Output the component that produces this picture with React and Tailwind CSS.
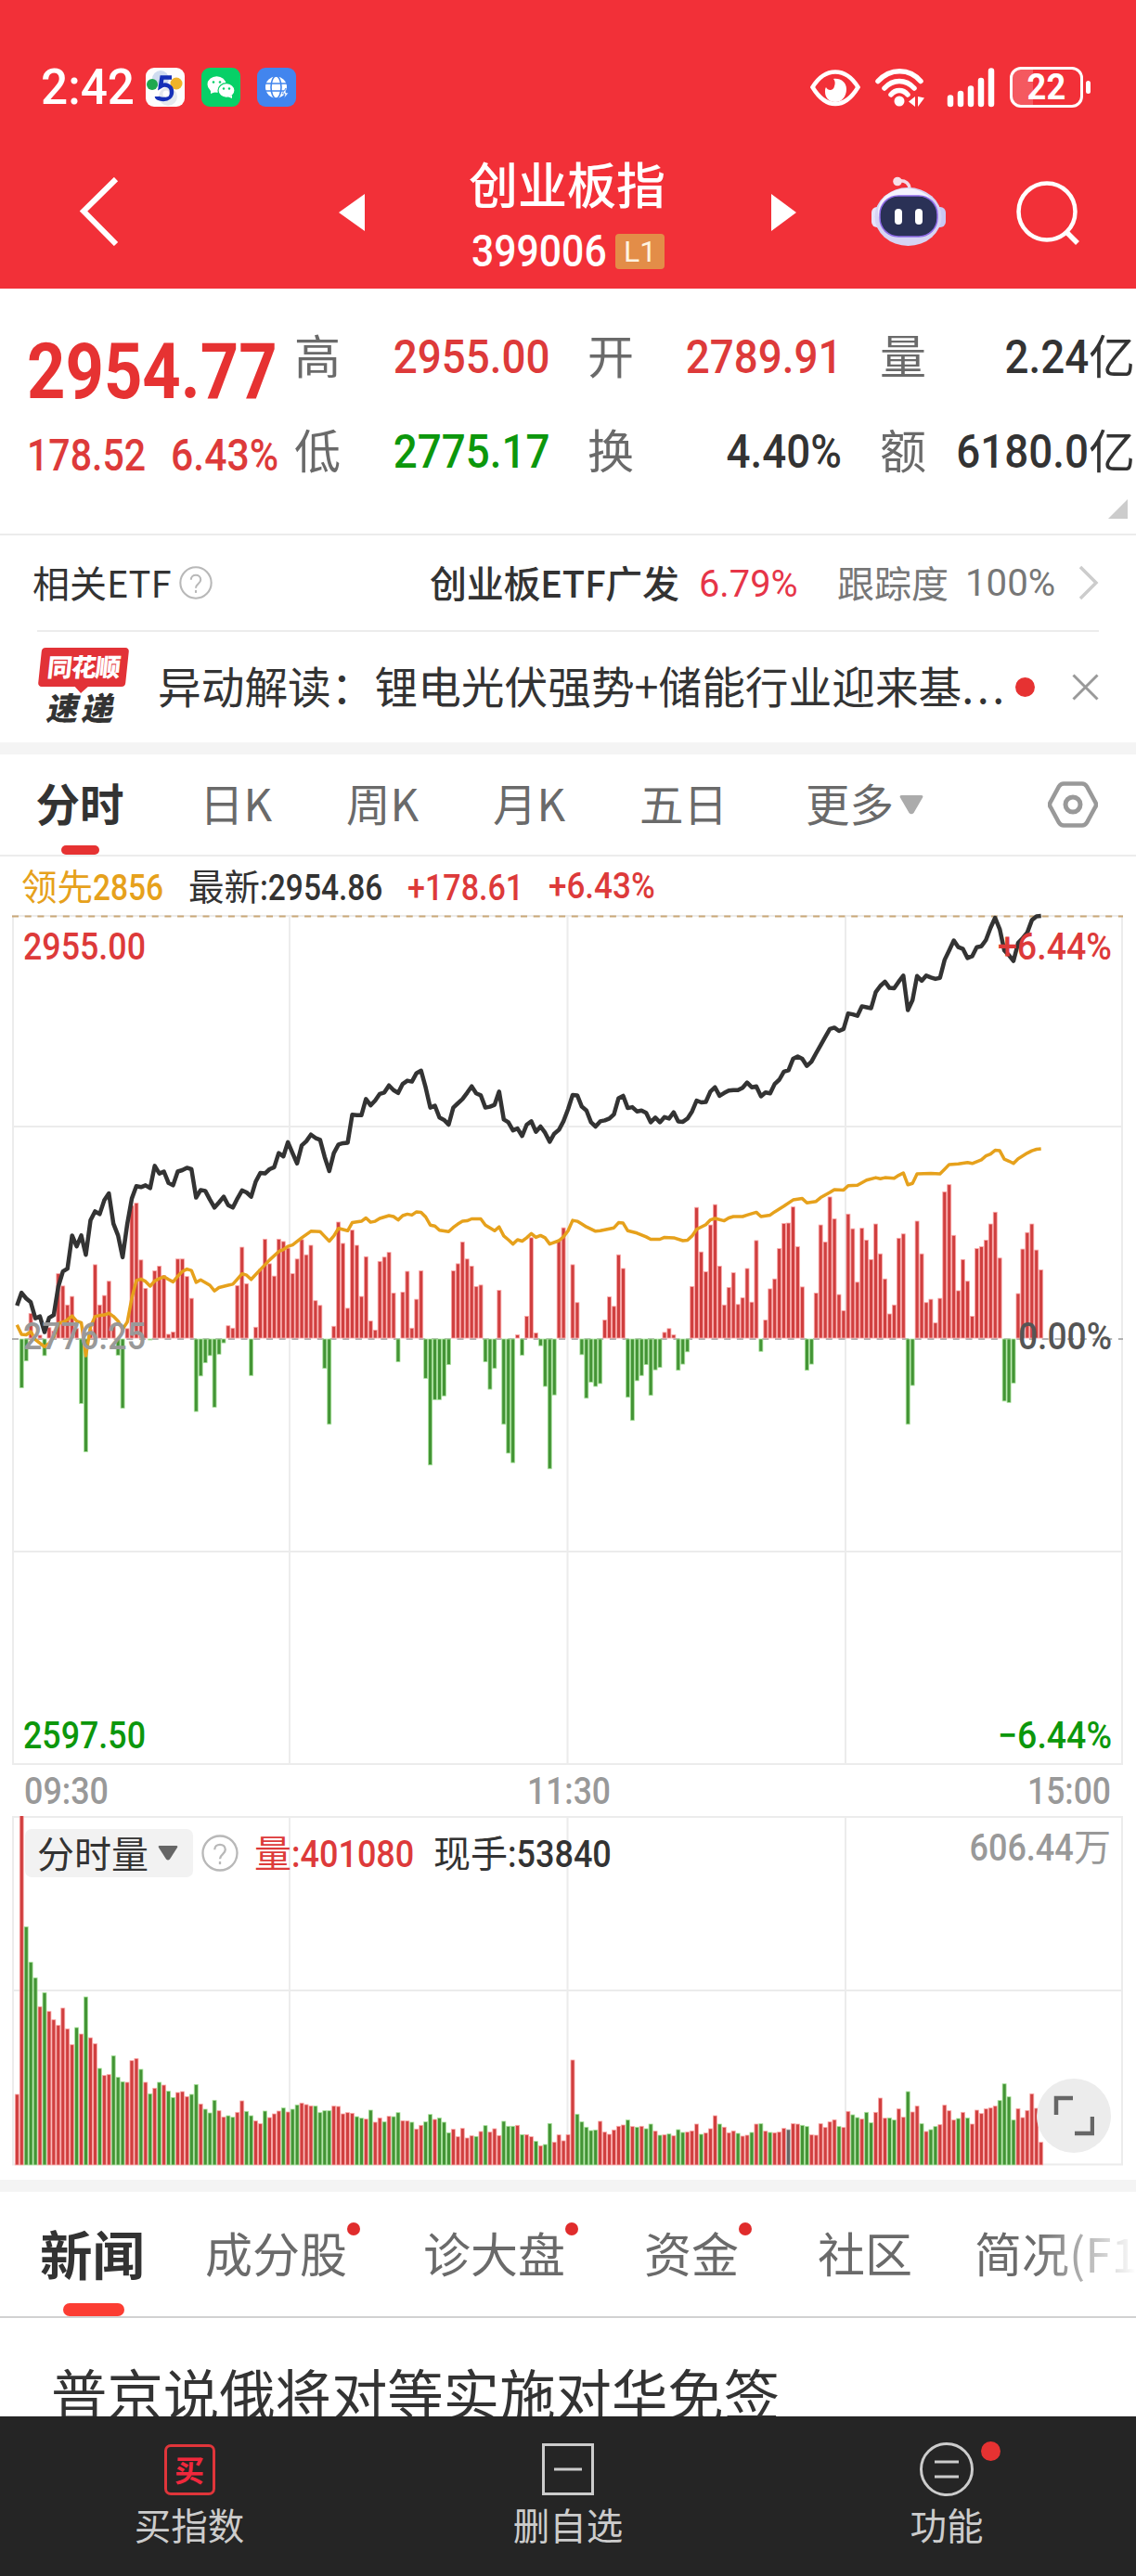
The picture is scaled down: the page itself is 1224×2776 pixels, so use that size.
import clsx from "clsx"

const PITCH = 4.948
const FIRST_X = 18.3

// price curve, one level per minute
const price = [
    1190, 1163, 1175, 1183, 1217, 1213, 1246, 1216, 1210, 1150, 1118, 1112, 1042, 1065, 1042, 1083, 1010, 991, 997, 968,
    953, 1017, 1042, 1088, 1018, 964, 938, 940, 936, 942, 895, 911, 907, 931, 936, 907, 904, 899, 902, 962,
    946, 948, 966, 983, 972, 960, 978, 983, 964, 947, 951, 960, 928, 910, 911, 902, 898, 868, 875, 845,
    868, 890, 852, 843, 829, 836, 840, 876, 906, 868, 850, 847, 846, 787, 788, 788, 754, 767, 757, 743,
    740, 725, 735, 741, 722, 715, 717, 699, 694, 730, 772, 768, 793, 798, 808, 772, 763, 754, 741, 727,
    742, 746, 772, 770, 766, 738, 797, 803, 820, 816, 832, 808, 801, 823, 812, 825, 844, 827, 819, 801,
    775, 745, 746, 770, 778, 803, 812, 801, 799, 795, 786, 752, 747, 773, 771, 780, 778, 783, 803, 793,
    803, 792, 795, 782, 801, 802, 795, 780, 757, 761, 760, 738, 729, 747, 741, 736, 735, 735, 730, 719,
    729, 727, 748, 740, 742, 722, 713, 696, 693, 669, 664, 669, 684, 675, 657, 640, 623, 606, 603, 610,
    606, 573, 575, 578, 558, 560, 562, 528, 515, 506, 519, 520, 506, 493, 566, 545, 494, 504, 493, 497,
    500, 498, 460, 440, 419, 433, 437, 456, 452, 433, 431, 418, 392, 371, 395, 440, 450, 462, 424, 414,
    402, 376, 368, 367,
]

// leading curve, [minute, level]
const leading = [
    [0, 1231], [1, 1251], [2, 1252], [3, 1245], [4, 1262], [6, 1277], [7, 1270], [8, 1255], [9, 1228], [10, 1225],
    [11, 1220], [12, 1212], [13, 1223], [14, 1226], [15, 1296], [16, 1235], [17, 1213], [18, 1211], [19, 1210], [20, 1206],
    [21, 1213], [22, 1223], [23, 1240], [24, 1225], [25, 1175], [26, 1137], [27, 1134], [28, 1139], [29, 1149], [30, 1138],
    [31, 1133], [32, 1129], [33, 1135], [34, 1140], [35, 1128], [36, 1118], [37, 1113], [38, 1116], [39, 1141], [40, 1136],
    [42, 1147], [43, 1159], [44, 1152], [46, 1147], [47, 1145], [48, 1134], [49, 1123], [50, 1126], [51, 1135], [53, 1114],
    [55, 1094], [57, 1076], [58, 1072], [59, 1065], [60, 1062], [62, 1047], [64, 1033], [66, 1034], [67, 1044], [68, 1054],
    [69, 1043], [70, 1027], [72, 1032], [73, 1015], [75, 1012], [76, 1005], [77, 1014], [78, 1012], [79, 1006], [81, 1000],
    [82, 1002], [83, 1009], [84, 1000], [85, 997], [86, 999], [87, 992], [88, 993], [89, 1003], [90, 1020], [91, 1022],
    [92, 1031], [94, 1034], [95, 1025], [96, 1018], [97, 1012], [98, 1011], [99, 1007], [101, 1007], [102, 1020], [104, 1032],
    [105, 1024], [106, 1043], [107, 1051], [108, 1060], [109, 1051], [110, 1054], [111, 1047], [112, 1038], [113, 1046], [114, 1042],
    [115, 1047], [116, 1060], [118, 1053], [119, 1045], [120, 1032], [121, 1010], [122, 1012], [123, 1018], [124, 1024], [126, 1033],
    [127, 1032], [130, 1026], [131, 1015], [132, 1016], [133, 1032], [135, 1037], [137, 1045], [138, 1050], [140, 1050], [141, 1046],
    [143, 1047], [145, 1053], [146, 1052], [147, 1043], [148, 1029], [150, 1019], [151, 1009], [152, 1006], [154, 1011], [155, 1005],
    [156, 1002], [158, 1002], [159, 999], [161, 993], [162, 1002], [164, 999], [165, 992], [167, 980], [169, 967], [171, 964],
    [172, 973], [174, 970], [175, 962], [177, 951], [178, 945], [180, 946], [181, 937], [183, 936], [185, 925], [187, 920],
    [188, 922], [189, 920], [191, 921], [192, 915], [193, 910], [194, 935], [195, 932], [196, 912], [199, 911], [201, 912],
    [202, 902], [203, 892], [205, 891], [207, 888], [208, 890], [210, 882], [211, 874], [212, 870], [213, 862], [214, 863],
    [215, 881], [216, 885], [217, 890], [218, 880], [220, 868], [221, 863], [222, 860], [223, 859],
]

// momentum bars around the zero line
const momentum = [
    0, -103, -46, 52, 0, 6, -35, 22, 15, 136, 110, 70, 88, 20, -136, -238, 18, 155, 70, 90,
    120, 28, -34, -146, 20, 280, 285, 165, 105, -2, 142, 152, 132, 8, 13, 167, 167, 130, 84, -153,
    -78, -50, -35, -144, -32, -8, 26, 21, 111, 192, 115, -77, 23, 145, 209, 157, 131, 209, 204, 190,
    136, 167, 208, 176, 196, 79, 69, -62, -180, 25, 245, 200, 63, 228, 196, 88, 172, 36, 17, 162,
    171, 181, 95, -48, 97, 141, 21, 82, 142, -83, -266, -128, -128, -120, -54, 142, 157, 203, 167, 152,
    109, 112, -48, -106, -62, 101, -180, -241, -261, 7, -34, 46, 212, 11, -14, -100, -274, -118, 207, 233,
    0, 155, 75, -33, -125, -91, -100, -94, 38, 87, 67, 176, 147, -123, -172, -88, -77, -54, -119, -65,
    -60, 12, 20, 7, -66, -53, -27, 109, 276, 182, 140, 239, 282, 152, 70, 107, 138, 71, 85, 147,
    76, 206, -26, 38, 104, 125, 189, 242, 243, 277, 193, 108, -66, -53, 95, 239, 203, 298, 252, 92,
    58, 262, 231, 118, 232, 207, 166, 241, 178, 125, 51, 70, 211, 220, -180, -98, 247, 178, 75, 82,
    32, 84, 309, 324, 217, 100, 166, 120, 46, 189, 193, 207, 241, 266, 169, -131, -134, -93, 94, 188,
    223, 241, 186, 144,
]

// volume levels, a negative one is a falling minute
const volume = [
    1252, 350, -710, -825, -875, 969, -923, 984, 1011, 1029, 973, 1040, 1091, -1036, 1057, -937, 1069, 1088, -1168, 1191,
    1188, -1127, -1197, -1211, 1213, 1143, 1136, -1171, 1213, -1250, 1232, -1213, 1222, -1242, -1262, 1246, 1243, 1259, -1252, -1220,
    1283, -1300, -1312, -1271, 1305, 1325, -1321, -1326, 1310, 1273, -1307, -1321, 1338, 1347, -1306, 1327, 1315, 1306, -1296, 1309,
    -1300, -1286, 1280, 1285, 1289, -1290, -1311, -1305, -1305, 1290, 1291, 1315, 1311, 1313, -1324, -1329, 1332, -1303, 1342, 1328,
    -1341, 1323, -1324, -1311, 1337, 1338, -1342, 1364, 1352, -1341, -1317, 1333, -1328, -1342, -1376, 1365, 1389, 1362, 1393, 1386,
    -1388, 1372, -1353, 1374, 1363, 1385, -1339, -1355, -1355, 1352, -1382, 1382, 1389, -1404, 1418, -1414, -1346, 1407, 1383, 1402,
    1382, 1141, -1316, -1341, -1358, -1369, -1367, 1339, 1374, 1381, 1367, 1355, 1351, -1335, 1356, -1358, 1355, -1363, -1348, 1371,
    -1384, 1383, -1380, 1386, -1366, -1375, 1374, 1370, 1348, -1381, 1377, 1363, 1321, -1348, 1358, 1376, 1370, -1378, 1387, 1384,
    -1375, 1348, -1347, 1371, -1375, 1376, 1374, 1362, 1366, 1347, 1348, -1352, -1356, 1383, 1384, 1347, 1359, 1341, 1334, -1356,
    1359, 1307, -1318, -1327, 1332, -1310, -1344, 1310, 1264, 1329, -1328, -1335, 1299, 1326, -1243, 1309, 1290, -1347, 1372, -1366,
    -1356, 1350, 1287, 1305, 1335, -1330, 1310, -1328, 1348, 1303, 1314, 1299, 1296, 1290, -1272, -1218, -1260, -1335, 1298, 1327,
    1304, 1250, 1297, 1407,
]
const FLAT_MINUTE = 168

const xAt = (i) => FIRST_X + i * PITCH
const yAt = (level) => (level - 367) / 1.96
const toPoints = (pairs) => pairs.map(([i, level]) => `${xAt(i).toFixed(1)},${yAt(level).toFixed(1)}`).join(" ")

const UP = { fill: "#d03f3f", stroke: "#fba9a9" }
const DOWN = { fill: "#439435", stroke: "#a9e39c" }
const FLAT = { fill: "#666666", stroke: "#c0c0c0" }

const Bar = ({ i, y, height, color }) => (
    <rect x={xAt(i) - 2} y={y} width="4" height={height} fill={color.fill} stroke={color.stroke} strokeWidth="0.8" />
)

// digits of the quote font are narrower than Roboto
const Num = ({ children, className }) => (
    <span className={clsx("inline-block whitespace-nowrap font-[Roboto]", className)}>{children}</span>
)

const ChartText = ({ x, y, width, fill, weight = 500, children }) => (
    <text
        x={x}
        y={y}
        textLength={width}
        lengthAdjust="spacingAndGlyphs"
        fill={fill}
        fontSize="40"
        fontWeight={weight}
        fontFamily="Roboto, 'Noto Sans CJK SC', sans-serif"
    >
        {children}
    </text>
)

const HelpIcon = ({ size }) => (
    <svg width={size} height={size} viewBox="0 0 38 38" fill="none" stroke="#b8b8b8" strokeWidth="2.2" className="shrink-0">
        <circle cx="19" cy="19" r="17.6" />
        <path d="M13.5 15.5c0-7 11-7 11 0 0 4.500-5.500 4.500-5.500 9.500" />
        <path d="M19 27.500v3" />
    </svg>
)

const StatusBar = () => (
    <div className="flex h-[50px] items-center pl-[44px] pr-[49px]">
        <div className="w-[113px]">
            <Num className="origin-left scale-x-[.95] text-[54px] leading-[50px] font-medium">2:42</Num>
        </div>
        <div className="flex gap-[18px]">
            <svg width="42" height="42" viewBox="0 0 42 42">
                <rect width="42" height="42" rx="9" fill="#fdfdfd" />
                <circle cx="16" cy="12" r="9" fill="#cfdcf0" />
                <circle cx="24" cy="31" r="10" fill="#e4e8ee" />
                <circle cx="7" cy="18" r="6" fill="#1fa84f" />
                <circle cx="33" cy="17" r="6.500" fill="#f0b32a" />
                <path d="M28 10.500H17.500L16 20c5-3 12-1 12 6 0 5-4 8-9 8-4 0-7-1.500-7-3" fill="none" stroke="#1530b8" strokeWidth="4.500" />
                <circle cx="22" cy="28" r="3.500" fill="#fff" />
            </svg>
            <svg width="42" height="42" viewBox="0 0 42 42">
                <rect width="42" height="42" rx="9" fill="#07d067" />
                <ellipse cx="16.500" cy="18" rx="10" ry="8.700" fill="#fff" />
                <path d="M10 24v4l5-2z" fill="#fff" />
                <ellipse cx="27" cy="24.500" rx="9" ry="7.800" fill="#fff" stroke="#07d067" strokeWidth="1.200" />
                <path d="M33 30v3l-5-2z" fill="#fff" />
                <circle cx="13" cy="15.500" r="1.300" fill="#07d067" />
                <circle cx="20" cy="15.500" r="1.300" fill="#07d067" />
                <circle cx="24" cy="22.500" r="1.200" fill="#07d067" />
                <circle cx="30" cy="22.500" r="1.200" fill="#07d067" />
            </svg>
            <svg width="42" height="42" viewBox="0 0 42 42">
                <rect width="42" height="42" rx="9" fill="#4285ee" />
                <circle cx="20.500" cy="21" r="11.500" fill="#fff" />
                <g fill="none" stroke="#4285ee" strokeWidth="1.600">
                    <ellipse cx="20.500" cy="21" rx="5.500" ry="12" />
                    <path d="M8 17h25M8 25h25" />
                </g>
                <path d="m31 22-4 6h3l-1 5 5-6h-3z" fill="#fff" stroke="#4285ee" strokeWidth=".8" />
            </svg>
        </div>
        <div className="ml-auto flex items-center">
            <svg width="54" height="44" viewBox="0 0 54 44">
                <path d="M2.500 22C8 13 16 5.500 27 5.500S46 13 51.500 22C46 31 38 40 27 40S8 31 2.500 22z" fill="none" stroke="#fff" strokeWidth="4.500" />
                <path d="M25 13c8-1 14 4 14 11 0 8-5 14-12 14s-11-5-11-11c0-2 0-4 1-5 2 4 8 4 9-1 1-3 1-6-1-8z" fill="#fff" />
            </svg>
            <svg width="54" height="44" viewBox="0 0 54 44" className="ml-[15px]" fill="none" stroke="#fff" strokeWidth="5.500" strokeLinecap="round">
                <path d="M4 15.500c13-14.500 34-14.500 46 0" />
                <path d="M11 23c9-10 23-10 32 0" />
                <path d="M18 30c5-6 13-6 18 0" />
                <circle cx="27" cy="37" r="5.500" fill="#fff" stroke="none" />
                <path d="M44 32v11l-7-5.500zM47 32v11l7-9.500z" fill="#fff" stroke="none" />
            </svg>
            <svg width="52" height="44" viewBox="0 0 52 44" className="ml-[24px]" stroke="#fff" strokeWidth="6.500" strokeLinecap="round">
                <path d="M4 33.500v6.500M15 29v11M26 23.500v16.500M37 15v25M48 4.500v35.500" />
            </svg>
            <div className="ml-[16px] flex h-[44px] w-[79px] items-center justify-center rounded-[12px] border-[3.500px] border-white bg-linear-to-r from-white/20 from-30% to-transparent to-30%">
                <Num className="scale-x-[.93] text-[39px] leading-none font-bold">22</Num>
            </div>
            <div className="ml-[3px] h-[14px] w-[5px] rounded-full bg-white" />
        </div>
    </div>
)

const RobotIcon = () => (
    <svg width="82" height="76" viewBox="0 0 82 76">
        <path d="M30 5c8-1 12 3 12 9" fill="none" stroke="#f3d9e6" strokeWidth="3.500" />
        <circle cx="29" cy="5.500" r="4.800" fill="#f7dfe8" />
        <rect x="1" y="33" width="14" height="22" rx="6" fill="#e6e3fb" />
        <rect x="67" y="33" width="14" height="22" rx="6" fill="#c9c8f3" />
        <ellipse cx="40.500" cy="43.500" rx="36" ry="31.500" fill="#d6d4f4" />
        <ellipse cx="39" cy="38" rx="31" ry="25" fill="#f4f3fd" />
        <rect x="10" y="21" width="62" height="44" rx="20" fill="#2a3156" stroke="#8f6be8" strokeWidth="1.500" />
        <rect x="26" y="35" width="8" height="17" rx="4" fill="#fff" />
        <rect x="48" y="35" width="8" height="17" rx="4" fill="#fff" />
    </svg>
)

const TitleBar = () => (
    <div className="flex h-[130px] items-center pl-[84px] pr-[59px]">
        <svg width="44" height="74" viewBox="0 0 44 74" fill="none" stroke="#fff" strokeWidth="6">
            <path d="M41 2 6 36.500 41 72" />
        </svg>
        <svg width="28" height="40" viewBox="0 0 28 40" className="ml-[237px] mt-px">
            <path d="M28 0v40L0 20z" fill="#fff" />
        </svg>
        <div className="ml-[112px] flex w-[213px] flex-col pt-[3px]">
            <div className="text-[53px] leading-[60px] font-medium whitespace-nowrap">创业板指</div>
            <div className="mt-[22px] flex h-[44px] items-center">
                <div className="ml-[3px] w-[155px]">
                    <Num className="origin-left scale-x-[.89] text-[48px] leading-[44px] font-medium">399006</Num>
                </div>
                <div className="flex h-[38px] w-[53px] items-center justify-center rounded-[4px] bg-[#e38d48] text-[32px] leading-none text-[#fff3e0]">
                    <Num>L1</Num>
                </div>
            </div>
        </div>
        <svg width="27" height="40" viewBox="0 0 27 40" className="ml-[113px] mt-px">
            <path d="M0 0v40l27-20z" fill="#fff" />
        </svg>
        <div className="ml-[80px]">
            <RobotIcon />
        </div>
        <svg width="70" height="70" viewBox="0 0 70 70" className="ml-auto mt-1" fill="none" stroke="#fff" strokeWidth="4.500">
            <circle cx="33" cy="33" r="30.500" />
            <path d="m53 54 13 13" strokeWidth="5.500" />
        </svg>
    </div>
)

const Header = () => (
    <header className="h-[311px] bg-[#f23038] pt-[69px] text-white">
        <StatusBar />
        <div className="mt-[44px]">
            <TitleBar />
        </div>
    </header>
)

const QuoteCell = ({ label, value, unit, color }) => (
    <div className="flex h-[102px] items-center text-[50px] leading-none">
        <span className="pb-[7px] text-[#6a6a6a]">{label}</span>
        <span className={clsx("ml-auto flex items-center whitespace-nowrap", color)}>
            <Num className="origin-right scale-x-[.915] pt-[2px] font-medium">{value}</Num>
            {unit && <span className="pb-[7px]">{unit}</span>}
        </span>
    </div>
)

const Quote = () => (
    <section className="relative flex h-[266px] border-b-2 border-[#ececec] pt-[22px]">
        <div className="w-[317px] pl-[29px]">
            <div className="h-[102px] pt-[28px] text-[#e63232]">
                <Num className="origin-left scale-x-[.86] text-[84px] leading-[80px] font-bold">2954.77</Num>
            </div>
            <div className="flex h-[106px] items-center pt-[6px] text-[#dd3a3a]">
                <div className="w-[155px]">
                    <Num className="origin-left scale-x-[.855] text-[48px] leading-none font-medium">178.52</Num>
                </div>
                <Num className="origin-left scale-x-[.89] text-[48px] leading-none font-medium">6.43%</Num>
            </div>
        </div>
        <div className="grid grid-cols-[275px_274px_275px] content-start gap-x-[41px]">
            <QuoteCell label="高" value="2955.00" color="text-[#dd3a3a]" />
            <QuoteCell label="开" value="2789.91" color="text-[#dd3a3a]" />
            <QuoteCell label="量" value="2.24" unit="亿" color="text-[#333]" />
            <QuoteCell label="低" value="2775.17" color="text-[#0c970c]" />
            <QuoteCell label="换" value="4.40%" color="text-[#333]" />
            <QuoteCell label="额" value="6180.0" unit="亿" color="text-[#333]" />
        </div>
        <svg width="21" height="21" viewBox="0 0 21 21" className="absolute right-[9px] bottom-[16px]">
            <path d="M21 0v21H0z" fill="#ccc" />
        </svg>
    </section>
)

const EtfRow = () => (
    <section className="mr-[40px] flex h-[102px] items-center pl-[35px] text-[40px] leading-none whitespace-nowrap text-[#333]">
        <span className="w-[158px] pb-[3px]">相关ETF</span>
        <HelpIcon size={36} />
        <span className="ml-[234px] w-[290px] pb-[3px] font-medium tracking-[-0.3px]">创业板ETF广发</span>
        <span className="w-[149px] text-[#e63548]">
            <Num className="origin-left scale-x-[.97] text-[41px]">6.79%</Num>
        </span>
        <span className="w-[138px] pb-[3px] text-[#777]">跟踪度</span>
        <Num className="origin-left scale-x-[.98] text-[41px] text-[#777]">100%</Num>
        <svg width="22" height="38" viewBox="0 0 22 38" className="ml-auto" fill="none" stroke="#ccc" strokeWidth="3.500">
            <path d="m2 2 17 17L2 36" />
        </svg>
    </section>
)

const NewsFlash = () => (
    <section className="ml-[40px] mr-[40px] flex h-[121px] items-center border-t-2 border-[#ececec]">
        <div className="flex w-[100px] flex-col items-center pb-1 leading-none">
            <div className="relative flex h-[42px] w-[94px] -skew-x-6 items-center justify-center rounded-[4px] bg-[#e23237] pb-[3px] text-[27px] font-black tracking-[-1px] text-white">
                同花顺
                <div className="absolute -bottom-[5px] size-[10px] rotate-45 bg-[#e23237]" />
            </div>
            <div className="mt-[5px] -skew-x-12 text-[34px] font-black tracking-[4px] text-[#333]">速递</div>
        </div>
        <div className="ml-[30px] w-[916px] pb-[4px] text-[46.700px] leading-none whitespace-nowrap text-[#333]">
            异动解读：锂电光伏强势+储能行业迎来基<span className="tracking-[3.500px]">...</span>
        </div>
        <div className="ml-[8px] size-[21px] rounded-full bg-[#e63232]" />
        <svg width="29" height="29" viewBox="0 0 29 29" className="ml-auto" stroke="#999" strokeWidth="3">
            <path d="m1.500 1.500 26 26M27.500 1.500l-26 26" />
        </svg>
    </section>
)

const periods = [
    { name: "日K", width: "w-[158px]" },
    { name: "周K", width: "w-[158px]" },
    { name: "月K", width: "w-[158px]" },
    { name: "五日", width: "w-[178px]" },
]

const PeriodTabs = () => (
    <nav className="flex h-[110px] items-center border-b-2 border-[#ececec] text-[47.500px] leading-none whitespace-nowrap text-[#6a6a6a]">
        <div className="relative ml-[39px] flex h-full w-[94px] items-center justify-center pb-[4px] font-bold text-[#333]">
            分时
            <div className="absolute bottom-0 left-[27px] h-[10px] w-[41px] rounded-full bg-[#e63232]" />
        </div>
        <div className="ml-[82px] flex pb-[4px]">
            {periods.map((period) => (
                <div key={period.name} className={period.width}>{period.name}</div>
            ))}
        </div>
        <span className="ml-px pb-[4px]">更多</span>
        <svg width="26" height="21" viewBox="0 0 26 21" className="ml-[6px]">
            <path d="M3 0h20q4 0 1.500 3.500L15.500 19q-2.500 2.500-5 0L1.500 3.500Q-1 0 3 0z" fill="#ababab" />
        </svg>
        <svg width="54" height="50" viewBox="0 0 54 50" className="mr-[41px] ml-auto" fill="none" stroke="#999" strokeWidth="4.500">
            <path d="M17 2.500h20q3 0 5 3L51 22q2 3 0 6l-9 16.500q-2 3-5 3H17q-3 0-5-3L3 28q-2-3 0-6L12 5.500q2-3 5-3z" />
            <circle cx="27" cy="25" r="8" strokeWidth="5" />
        </svg>
    </nav>
)

const Legend = () => (
    <div className="flex h-[64px] items-center pt-px text-[38.500px] leading-none whitespace-nowrap text-[#333]">
        <div className="ml-[23px] w-[180px] text-[#e6a11c]">
            领先<Num className="origin-left scale-x-[.87] font-medium">2856</Num>
        </div>
        <div className="w-[236px]">
            最新<Num className="origin-left scale-x-[.87] font-medium">:2954.86</Num>
        </div>
        <div className="w-[152px] text-[#dd3a3a]">
            <Num className="origin-left scale-x-[.885] font-medium">+178.61</Num>
        </div>
        <Num className="origin-left scale-x-[.91] font-medium text-[#dd3a3a]">+6.43%</Num>
    </div>
)

const gridX = [14, 312, 611.5, 911, 1209]

const PriceChart = () => (
    <svg width="1224" height="970" viewBox="0 0 1224 970" className="block overflow-visible">
        <g stroke="#ececec" strokeWidth="2">
            {gridX.map((x) => (
                <path key={x} d={`M${x} 0V914`} />
            ))}
            <path d="M13 0H1210M13 227H1210M13 685H1210M13 914H1210" />
        </g>
        <path d="M13 .5H1210" stroke="#c9a878" strokeWidth="2" strokeDasharray="7 6.700" />
        <path d="M13 456H1210" stroke="#999" strokeWidth="1.500" strokeDasharray="7 6.700" />
        {momentum.map((value, i) => {
            if (value === 0) return null
            const height = Math.abs(value) / 1.96
            return <Bar key={i} i={i} y={value > 0 ? 455 - height : 456} height={height} color={value > 0 ? UP : DOWN} />
        })}
        <polyline points={toPoints(leading)} fill="none" stroke="#e6a11c" strokeWidth="3.500" strokeLinejoin="round" />
        <polyline points={toPoints(price.map((level, i) => [i, level]))} fill="none" stroke="#333" strokeWidth="4.500" strokeLinejoin="round" />
        <ChartText x="25" y="47" width="132" fill="#dd3a3a">2955.00</ChartText>
        <ChartText x="1075" y="47" width="123" fill="#dd3a3a">+6.44%</ChartText>
        <ChartText x="25" y="467" width="132" fill="#999">2776.25</ChartText>
        <ChartText x="1097" y="467" width="101" fill="#555">0.00%</ChartText>
        <ChartText x="25" y="897" width="132" fill="#0c970c">2597.50</ChartText>
        <ChartText x="1075" y="897" width="123" fill="#0c970c">−6.44%</ChartText>
        <ChartText x="26" y="957" width="91" fill="#999">09:30</ChartText>
        <ChartText x="568" y="957" width="90" fill="#999">11:30</ChartText>
        <ChartText x="1107" y="957" width="90" fill="#999">15:00</ChartText>
    </svg>
)

const VolumeChart = () => (
    <div className="relative h-[392px]">
        <svg width="1224" height="392" viewBox="0 0 1224 392" className="block">
            <g stroke="#ececec" strokeWidth="2">
                {gridX.map((x) => (
                    <path key={x} d={`M${x} 0V376`} />
                ))}
                <path d="M13 1H1210M13 188H1210M13 375.500H1210" />
            </g>
            {volume.map((level, i) => {
                const height = (1480 - Math.abs(level)) / 3
                const color = i === FLAT_MINUTE ? FLAT : level > 0 ? UP : DOWN
                return <Bar key={i} i={i} y={376 - height} height={height} color={color} />
            })}
        </svg>
        <div className="absolute top-[14px] left-[27px] flex h-[52px] items-center text-[40px] leading-none whitespace-nowrap text-[#333]">
            <div className="flex h-[52px] w-[181px] items-center rounded-[7px] bg-[#f2f2f2] pl-[13px]">
                <span className="pb-[3px]">分时量</span>
                <svg width="22" height="16" viewBox="0 0 22 16" className="ml-[10px]">
                    <path d="M2 0h18q2 0 1 2L13 14.500q-2 2-4 0L1 2Q0 0 2 0z" fill="#666" />
                </svg>
            </div>
            <div className="ml-[9px] w-[57px]">
                <HelpIcon size={40} />
            </div>
            <div className="w-[193px] text-[#dd3a3a]">
                量<Num className="origin-left scale-x-[.9] font-medium">:401080</Num>
            </div>
            <div>
                现手<Num className="origin-left scale-x-[.9] font-medium">:53840</Num>
            </div>
        </div>
        <div className="absolute top-[9px] right-[27px] text-[40px] leading-[44px] whitespace-nowrap text-[#999]">
            <Num className="origin-right scale-x-[.9] font-medium">606.44</Num>万
        </div>
        <div className="absolute top-[283px] right-[27px] flex size-[80px] items-center justify-center rounded-full bg-[#ececec]">
            <svg width="44" height="44" viewBox="0 0 44 44" fill="none" stroke="#666" strokeWidth="4.500">
                <path d="M3 21V3h18M42 23v18H23" />
            </svg>
        </div>
    </div>
)

const sections = [
    { name: "成分股", margin: "ml-[65px]", dot: true },
    { name: "诊大盘", margin: "ml-[82px]", dot: true },
    { name: "资金", margin: "ml-[85px]", dot: true },
    { name: "社区", margin: "ml-[85px]" },
    { name: "简况(F10)", margin: "ml-[67px]" },
]

const InfoTabs = () => (
    <nav className="relative flex h-[136px] items-center overflow-hidden border-b-2 border-[#d2d2d2] text-[51px] leading-none whitespace-nowrap text-[#6a6a6a]">
        <div className="relative ml-[43px] flex h-full w-[113px] items-center justify-center pb-[4px] text-[56.500px] font-bold text-[#333]">
            新闻
            <div className="absolute bottom-0 left-[25px] h-[14px] w-[66px] rounded-full bg-[#fc3d33]" />
        </div>
        {sections.map((section) => (
            <div key={section.name} className={clsx("relative pb-[4px]", section.margin)}>
                {section.name}
                {section.dot && <div className="absolute -top-[7px] -right-[14px] size-[14px] rounded-full bg-[#e02c2c]" />}
            </div>
        ))}
        <div className="absolute right-0 h-full w-[110px] bg-linear-to-r from-white/0 to-white" />
    </nav>
)

const Action = ({ label, children }) => (
    <div className="flex flex-1 flex-col items-center pt-[28px]">
        <div className="relative flex h-[58px] items-center">{children}</div>
        <div className="mt-[10px] text-[39.500px] leading-[40px] text-[#ccc]">{label}</div>
    </div>
)

const BottomBar = () => (
    <footer className="flex h-[172px] bg-[#252525]">
        <Action label="买指数">
            <div className="flex size-[55px] items-center justify-center rounded-[7px] border-3 border-[#e0353a] pb-[2px] text-[32px] leading-none font-bold text-[#f0283c]">
                买
            </div>
        </Action>
        <Action label="删自选">
            <svg width="56" height="56" viewBox="0 0 56 56" fill="none" stroke="#ccc" strokeWidth="3">
                <path d="M1.500 1.500h53v53h-53zM13 28h30" />
            </svg>
        </Action>
        <Action label="功能">
            <svg width="58" height="58" viewBox="0 0 58 58" fill="none" stroke="#ccc" strokeWidth="3">
                <circle cx="29" cy="29" r="27.500" />
                <path d="M16 21h26M16 37h26" />
            </svg>
            <div className="absolute -top-[1px] -right-[29px] size-[21px] rounded-full bg-[#e63232]" />
        </Action>
    </footer>
)

export default function App() {
    return (
        <div className="flex h-[2776px] w-[1224px] flex-col overflow-hidden bg-white font-['Noto_Sans_CJK_SC',sans-serif]">
            <Header />
            <Quote />
            <EtfRow />
            <NewsFlash />
            <div className="h-[13px] shrink-0 bg-[#f4f4f4]" />
            <PeriodTabs />
            <Legend />
            <PriceChart />
            <VolumeChart />
            <div className="h-[13px] shrink-0 bg-[#f4f4f4]" />
            <InfoTabs />
            <div className="h-[106px] shrink-0 overflow-hidden pt-[50px] pl-[55px] text-[60.400px] leading-[60px] whitespace-nowrap text-[#333]">
                普京说俄将对等实施对华免签
            </div>
            <BottomBar />
        </div>
    )
}
